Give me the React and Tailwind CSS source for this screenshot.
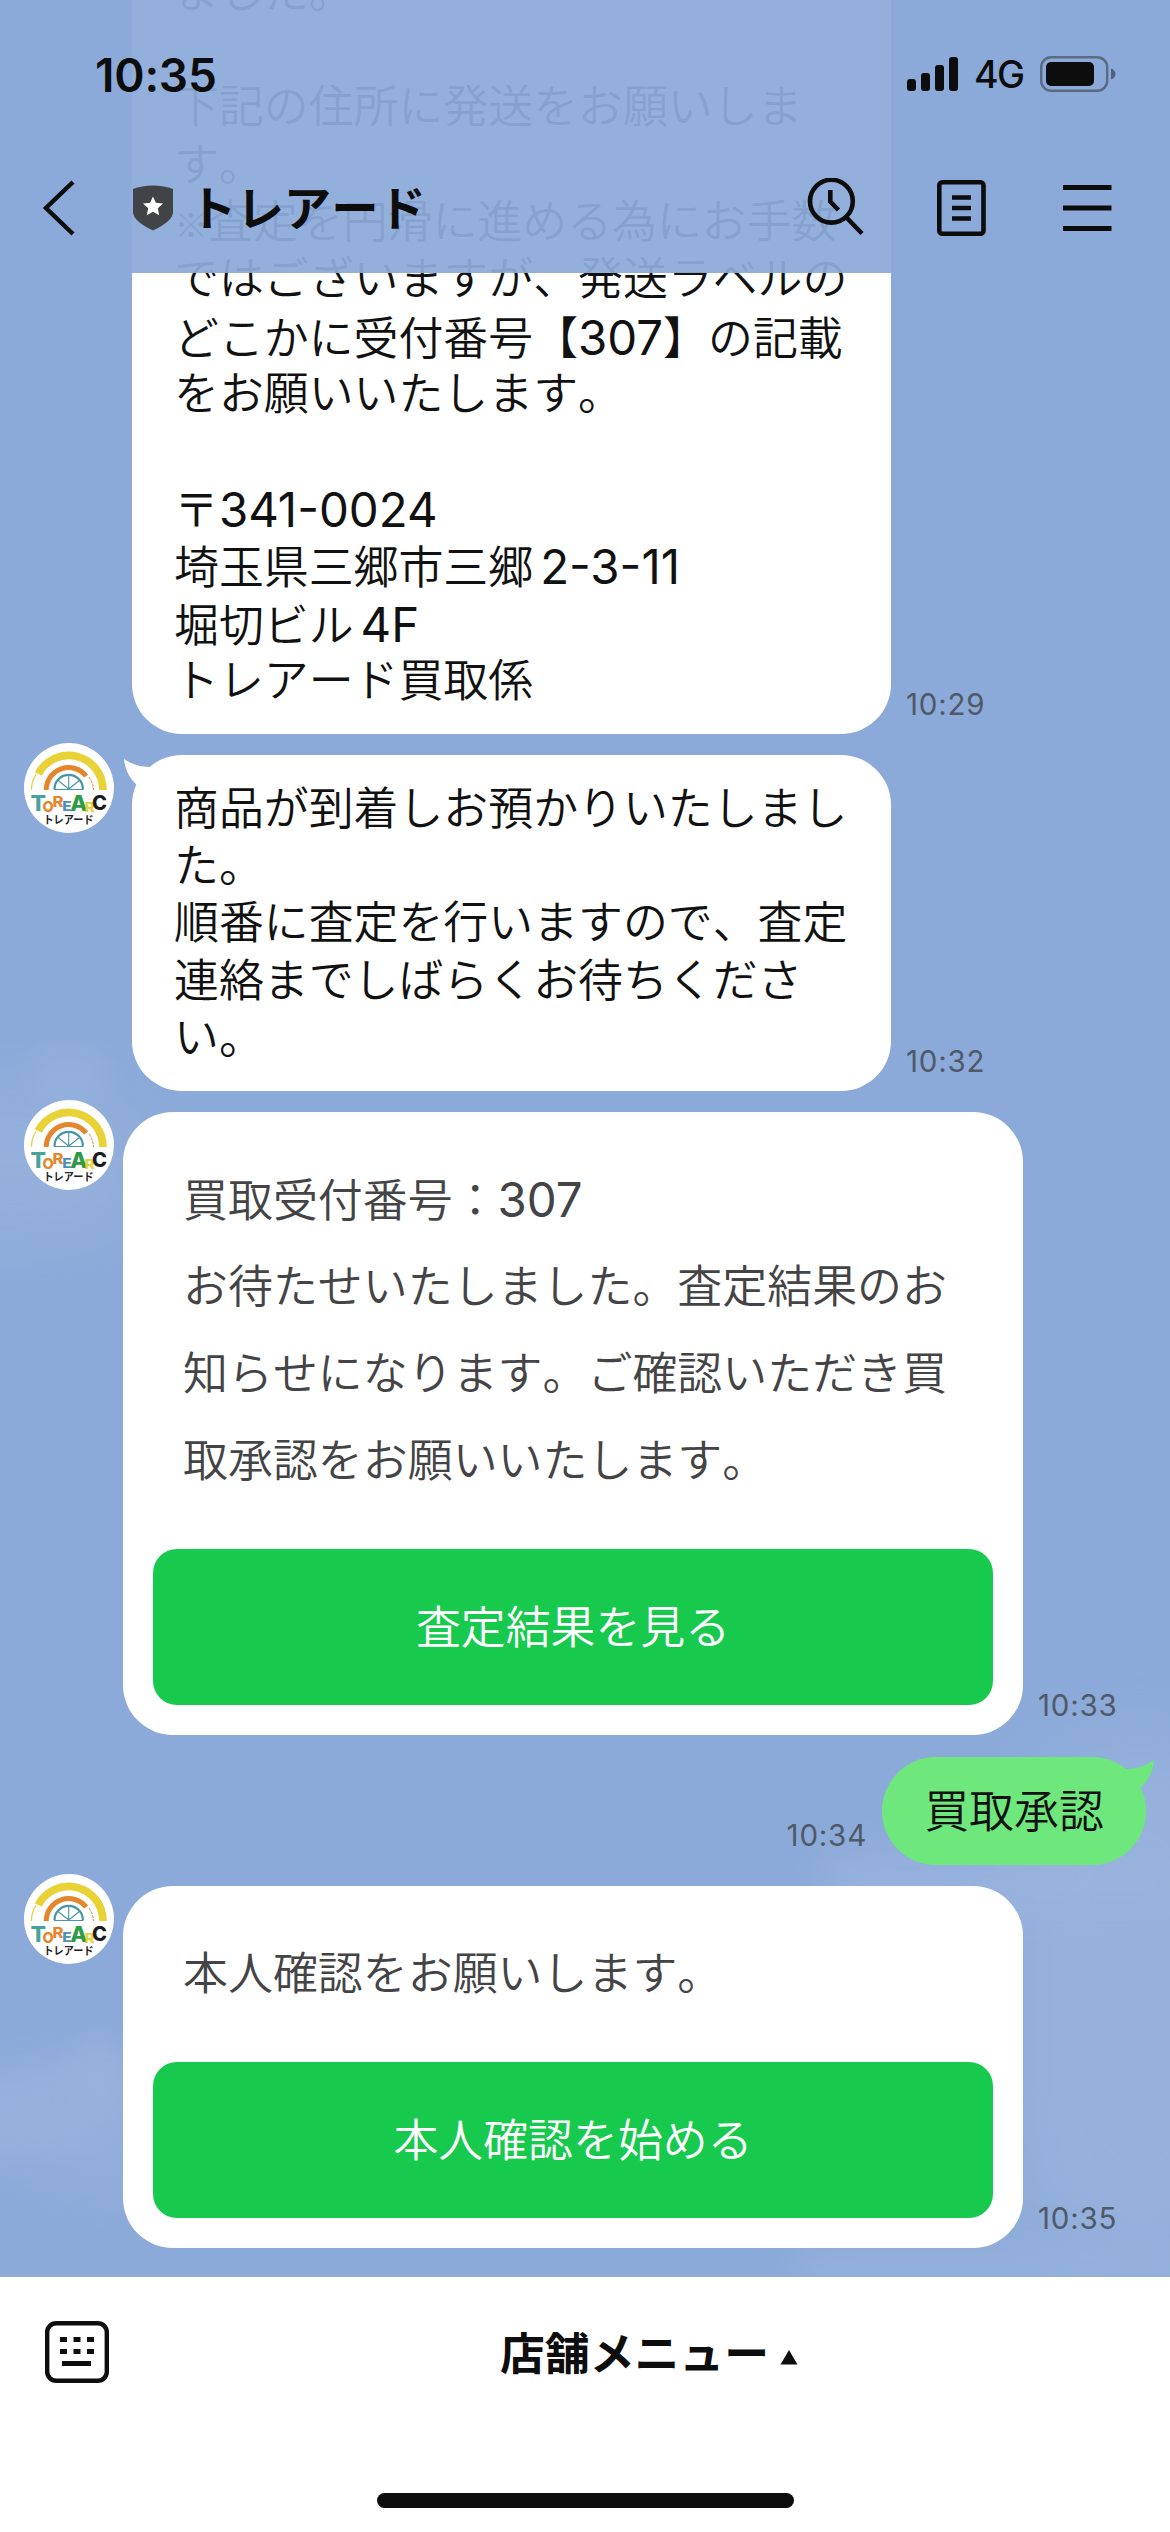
import React from "react";

const JP = "font-['Inter','Noto_Sans_CJK_JP',sans-serif]";

function Run({ text, spaced }) {
  if (/^[0-9A-Z-]+$/.test(text)) {
    return (
      <span className={`text-[47.4px] font-normal [font-kerning:normal] ${spaced ? "ml-[7px]" : ""}`}>{text}</span>
    );
  }
  if (text === "※") {
    return <span className="font-['Noto_Sans_CJK_JP'] text-[34px] leading-none">※</span>;
  }
  return <span>{text}</span>;
}

function Line({ text }) {
  if (!text) return <div className="h-[57.4px]" />;
  const parts = text.split(/([0-9A-Z-]+|※)/).filter(Boolean);
  return (
    <div className="h-[57.4px] leading-[57.4px] whitespace-nowrap">
      {parts.map((p, i) => (
        <Run key={i} text={p} spaced={i > 0 && /[郷ル]$/.test(parts[i - 1])} />
      ))}
    </div>
  );
}

function Avatar() {
  return (
    <svg viewBox="0 0 90 90" className="-mt-3 h-[90px] w-[90px] shrink-0">
      <circle cx="45" cy="45" r="45" fill="#fff" />
      <g fill="none">
        <path d="M14.3 31 A34.2 34.2 0 0 1 78.9 47" stroke="#e9d236" strokeWidth="7.8" />
        <path d="M7.5 47 Q7.5 38 12 31.5" stroke="#e9d236" strokeWidth="1.3" />
        <path d="M22.2 47 A22.5 22.5 0 0 1 62.2 33" stroke="#e5862c" strokeWidth="5" />
        <path d="M65 34 Q69.3 40 69.5 47" stroke="#e5862c" strokeWidth="1" strokeDasharray="3 1" />
        <path d="M30.5 46 A14.2 14.2 0 0 1 58.9 46" stroke="#4796a8" strokeWidth="2.2" />
        <path d="M30 46.5 H59.5 M44.7 46 V32 M44.7 46 L33.5 37 M44.7 46 L56 37" stroke="#4796a8" strokeWidth="1.1" />
      </g>
      <g fontFamily="Inter, sans-serif" fontWeight="800">
        <text x="6.5" y="67.5" fontSize="21.5" textLength="15.5" lengthAdjust="spacingAndGlyphs" fill="#46a39b">T</text>
        <text x="18.6" y="69" fontSize="14.5" fill="#e5862c">O</text>
        <text x="28.6" y="63.5" fontSize="14" textLength="11" lengthAdjust="spacingAndGlyphs" fill="#e5862c">R</text>
        <text x="38.3" y="67.7" fontSize="12.5" textLength="9.5" lengthAdjust="spacingAndGlyphs" fill="#4c8fb9">E</text>
        <text x="46.3" y="67.5" fontSize="21.5" textLength="17" lengthAdjust="spacingAndGlyphs" fill="#2f9a48">A</text>
        <text x="60.4" y="68.5" fontSize="13" textLength="10.5" lengthAdjust="spacingAndGlyphs" fill="#e9d236">R</text>
        <text x="68" y="67.3" fontSize="20" textLength="15" lengthAdjust="spacingAndGlyphs" fill="#1c1c1c">C</text>
      </g>
      <text x="19.5" y="81" fontSize="11" fontWeight="700" fontFamily="Noto Sans CJK JP" textLength="50" lengthAdjust="spacingAndGlyphs" fill="#222">トレアード</text>
    </svg>
  );
}

function Time({ children, className = "" }) {
  return (
    <span className={`text-[29.5px] font-normal leading-[36px] tracking-[0.8px] text-[#4f5967] ${className}`}>{children}</span>
  );
}

function TextRow({ avatar, lines, time }) {
  return (
    <div className="flex shrink-0 items-stretch pl-6">
      <div className="w-[108px] shrink-0">{avatar && <Avatar />}</div>
      <div className="relative w-[759px] shrink-0 rounded-[50px] bg-white pt-[25.5px] pr-[40px] pb-[23.5px] pl-[42px] text-[44.9px] font-[350] text-[#111] [font-kerning:none]">
        {avatar && (
          <svg viewBox="0 0 40 40" className="absolute top-0 -left-2 h-10 w-10">
            <path d="M0 4 C8 10 18 12 28 12 L32 30 L13 30 C6 24 1 15 0 4 Z" fill="#fff" />
          </svg>
        )}
        {lines.map((l, i) => (
          <Line key={i} text={l} />
        ))}
      </div>
      <Time className="mb-[12px] ml-[15px] self-end">{time}</Time>
    </div>
  );
}

function CardRow({ lines, button, time }) {
  return (
    <div className="flex shrink-0 pl-6">
      <div className="w-[99px] shrink-0">
        <Avatar />
      </div>
      <div className="w-[900px] shrink-0 rounded-[50px] bg-white px-[30px] pt-[44px] pb-[30px] [font-kerning:none]">
        <div className="mb-[45px] pl-[30px] text-[44.95px] font-[350] text-[#444446]">
          {lines.map((l, i) => (
            <div key={i} className="h-[87px] leading-[87px] whitespace-nowrap [&_div]:h-[87px] [&_div]:leading-[87px]">
              <Line text={l} />
            </div>
          ))}
        </div>
        <div className="flex h-[156px] items-center justify-center rounded-[24px] bg-[#17ca4e] pt-[3px] text-[44.9px] font-[350] text-white">
          {button}
        </div>
      </div>
      <Time className="mb-[12px] ml-[15px] self-end">{time}</Time>
    </div>
  );
}

function Sky() {
  return (
    <div className="absolute inset-0 overflow-hidden">
      <div className="absolute top-[1090px] -left-[120px] h-[150px] w-[260px] rounded-full bg-[#99b4dd] opacity-60 blur-[30px]" />
      <div className="absolute top-[1048px] left-[30px] h-[60px] w-[80px] rounded-full bg-[#98b3dd] opacity-50 blur-[12px]" />
      <div className="absolute top-[2035px] left-[70px] h-[70px] w-[60px] rounded-full bg-[#98b3dd] opacity-50 blur-[12px]" />
      <div className="absolute top-[2060px] -left-[60px] h-[90px] w-[200px] -rotate-12 rounded-full bg-[#9bb5de] opacity-60 blur-[16px]" />
      <div className="absolute top-[2110px] left-[0px] h-[80px] w-[180px] rotate-12 rounded-full bg-[#98b3dd] opacity-50 blur-[24px]" />
      <div className="absolute top-[1740px] left-[1010px] h-[520px] w-[260px] rounded-full bg-[#9bb5de] opacity-70 blur-[36px]" />
      <div className="absolute top-[1850px] left-[820px] h-[70px] w-[380px] rounded-full bg-[#9ab4de] opacity-70 blur-[18px]" />
      <div className="absolute top-[2240px] left-[790px] h-[90px] w-[440px] rounded-full bg-[#98b3dd] opacity-60 blur-[16px]" />
    </div>
  );
}

function Header() {
  return (
    <header className="absolute inset-x-0 top-0 h-[273px] bg-[#8caad9]/94 text-[#0d0d0d]">
      <div className="flex h-[148px] items-center pr-[54px] pl-[95px]">
        <span className="pt-[2px] text-[46px] font-semibold tracking-[-0.2px]">10:35</span>
        <svg viewBox="0 0 52 36" className="ml-auto h-9 w-[52px]" fill="#0d0d0d">
          <rect x="0" y="23" width="9" height="12" rx="3" />
          <rect x="14" y="17" width="9" height="18" rx="3" />
          <rect x="28" y="9" width="9" height="26" rx="3" />
          <rect x="42" y="1" width="9" height="34" rx="3" />
        </svg>
        <span className="ml-[15px] w-[50px] pt-[3px] text-[37.5px] font-[450] tracking-[-1.5px] whitespace-nowrap">4G</span>
        <svg viewBox="0 0 76 36" className="ml-[16px] h-9 w-[76px]">
          <rect x="1.2" y="1.2" width="66" height="33.6" rx="10" fill="none" stroke="#5a6a80" strokeWidth="2.4" />
          <rect x="6" y="6" width="48" height="24" rx="5" fill="#0d0d0d" />
          <path d="M71 12.5 Q75.5 14.5 75.5 18 Q75.5 21.5 71 23.5 Z" fill="#51617a" />
        </svg>
      </div>
      <div className="flex h-[120px] items-center pr-[58px] pl-[42px]">
        <svg viewBox="0 0 34 56" className="h-14 w-[34px]" fill="none" stroke="#0d0d0d" strokeWidth="4.5">
          <path d="M31 2 L4 28 L31 54" />
        </svg>
        <svg viewBox="0 0 40 46" className="ml-[57px] h-[46px] w-10">
          <path d="M20 0.5 Q31 0.5 40 4 V27 Q40 36 20 45.5 Q0 36 0 27 V4 Q9 0.5 20 0.5 Z" fill="#414347" />
          <path d="M20 11.5 L22.9 17.8 L30 18.6 L24.8 23.3 L26.2 30.3 L20 26.8 L13.8 30.3 L15.2 23.3 L10 18.6 L17.1 17.8 Z" fill="#fff" />
        </svg>
        <span className="ml-[16px] pt-[2px] text-[47.4px] font-bold whitespace-nowrap [font-kerning:none]">トレアード</span>
        <svg viewBox="0 0 60 60" className="ml-auto h-[60px] w-[60px]" fill="none" stroke="#0d0d0d" strokeWidth="4.6">
          <circle cx="26.4" cy="23.2" r="21.4" />
          <path d="M41 39 L57 55.5 M25.3 12 V23.5 L33.5 32" />
        </svg>
        <svg viewBox="0 0 49 56" className="ml-[72px] h-14 w-[49px]" fill="none" stroke="#0d0d0d" strokeWidth="4.6">
          <rect x="2.3" y="2.3" width="44.2" height="51.4" rx="3" />
          <path d="M15 17.5 H34 M15 28 H34 M15 38.5 H34" />
        </svg>
        <svg viewBox="0 0 50 46" className="ml-[76px] h-[46px] w-[50px]" fill="none" stroke="#0d0d0d" strokeWidth="4.8">
          <path d="M1 2.5 H49.5 M1 23 H49.5 M1 43.5 H49.5" />
        </svg>
      </div>
    </header>
  );
}

export default function App() {
  return (
    <div className={`relative flex h-[2532px] w-[1170px] flex-col overflow-hidden bg-white ${JP}`} lang="ja">
      <main className="relative h-[2277px] shrink-0 overflow-hidden bg-[#8caad9]">
        <Sky />
        <div className="relative flex h-full flex-col justify-end gap-[21px] pb-[29px]">
          <TextRow
            time="10:29"
            lines={[
              "ました。",
              "",
              "下記の住所に発送をお願いしま",
              "す。",
              "※査定を円滑に進める為にお手数",
              "ではございますが、発送ラベルの",
              "どこかに受付番号【307】の記載",
              "をお願いいたします。",
              "",
              "〒341-0024",
              "埼玉県三郷市三郷2-3-11",
              "堀切ビル4F",
              "トレアード買取係",
            ]}
          />
          <TextRow
            avatar
            time="10:32"
            lines={["商品が到着しお預かりいたしまし", "た。", "順番に査定を行いますので、査定", "連絡までしばらくお待ちくださ", "い。"]}
          />
          <CardRow
            time="10:33"
            lines={[
              "買取受付番号：307",
              "お待たせいたしました。査定結果のお",
              "知らせになります。ご確認いただき買",
              "取承認をお願いいたします。",
            ]}
            button="査定結果を見る"
          />
          <div className="mt-px flex shrink-0 items-end justify-end pr-6">
            <Time className="mr-[15px] mb-[12px]">10:34</Time>
            <div className="relative flex h-[108px] w-[264px] items-center justify-center rounded-[54px] bg-[#6ee87d] pt-[3px] text-[44.9px] font-[350] text-[#111]">
              <svg viewBox="0 0 40 40" className="absolute top-0 -right-2 h-10 w-10">
                <path d="M40 3 C32 9 22 12 13 12 L8 30 L27 30 C34 24 39 15 40 3 Z" fill="#6ee87d" />
              </svg>
              <span className="relative">買取承認</span>
            </div>
          </div>
          <CardRow time="10:35" lines={["本人確認をお願いします。"]} button="本人確認を始める" />
        </div>
        <Header />
      </main>
      <footer className="flex h-[255px] shrink-0 flex-col items-center">
        <div className="flex h-[154px] w-full items-center pl-[45px]">
          <svg viewBox="0 0 64 62" className="mb-[4px] h-[62px] w-16" fill="none" stroke="#0d0d0d" strokeWidth="4.4">
            <rect x="2.2" y="2.2" width="59.6" height="57.6" rx="9" />
            <path d="M15 18.5 h7 M28.5 18.5 h7 M42 18.5 h7 M15 30.5 h7 M28.5 30.5 h7 M42 30.5 h7 M17 42.5 H46" strokeWidth="5" />
          </svg>
          <span className="ml-[391px] pt-[2px] text-[44.85px] font-bold whitespace-nowrap text-[#0d0d0d]">店舗メニュー</span>
          <svg viewBox="0 0 18 15" className="mt-[6px] ml-[11px] h-[15px] w-[18px]">
            <path d="M9 0 L17.5 14.5 H0.5 Z" fill="#0d0d0d" />
          </svg>
        </div>
        <div className="mt-[62px] h-[15px] w-[417px] rounded-full bg-[#0d0d0d]" />
      </footer>
    </div>
  );
}
